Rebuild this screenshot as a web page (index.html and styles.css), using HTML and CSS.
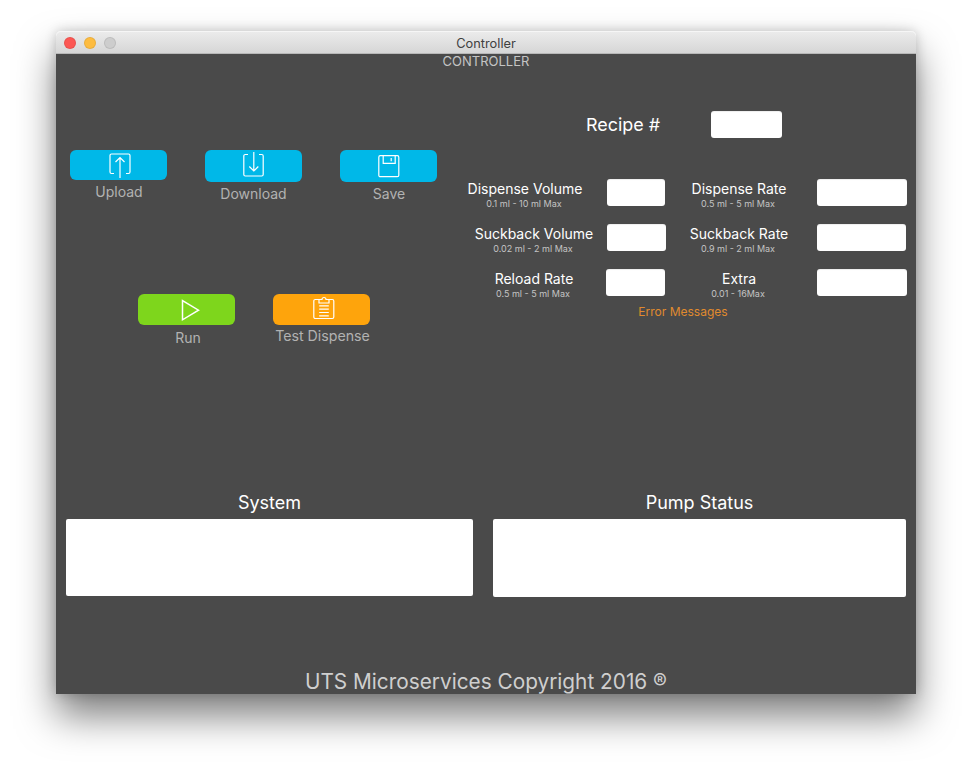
FILE: index.html
```html
<!DOCTYPE html>
<html lang="en">
  <head>
    <meta charset="UTF-8" />
    <title>Controller</title>
    <link rel="stylesheet" href="styles.css">
  </head>
  <body>
    <div class="window">
      <div class="titlebar">
        <div class="lights">
          <span class="light red"></span>
          <span class="light yellow"></span>
          <span class="light gray"></span>
        </div>
        <span class="title">Controller</span>
      </div>
      <div class="content">
        <div class="heading">CONTROLLER</div>
        <div class="main">
          <div class="left">
            <div class="tools">
              <div class="tool">
                <button class="btn blue short">
                  <svg class="icon" width="24" height="24" viewBox="0 0 24 24" fill="none" stroke="#fff" stroke-width="1.2">
                    <path d="M7 20.500H4.500A1.500 1.500 0 0 1 3 19V2.500A1.500 1.500 0 0 1 4.500 1H21.500A1.500 1.500 0 0 1 23 2.500V19A1.500 1.500 0 0 1 21.500 20.500H19" />
                    <path d="M13 25V4.500M8.500 9L13 4.500L17.500 9" />
                  </svg>
                </button>
                <span class="tool-label shift-1">Upload</span>
              </div>
              <div class="tool">
                <button class="btn blue">
                  <svg class="icon" width="24" height="24" viewBox="0 0 24 24" fill="none" stroke="#fff" stroke-width="1.2">
                    <path d="M6 0.500H3.300A1.500 1.500 0 0 0 1.800 2V20.500A1.500 1.500 0 0 0 3.300 22H19.700A1.500 1.500 0 0 0 21.200 20.500V2A1.500 1.500 0 0 0 19.700 0.500H17" />
                    <path d="M11.800 -2V17M7.300 12.500L11.800 17L16.300 12.500" />
                  </svg>
                </button>
                <span class="tool-label">Download</span>
              </div>
              <div class="tool">
                <button class="btn blue">
                  <svg class="icon" width="24" height="24" viewBox="0 0 24 24" fill="none" stroke="#fff" stroke-width="1.2">
                    <path d="M3.300 1.700H20.300A1.500 1.500 0 0 1 21.800 3.200V21.200A1.500 1.500 0 0 1 20.300 22.700H3.300A1.500 1.500 0 0 1 1.800 21.200V3.200A1.500 1.500 0 0 1 3.300 1.700Z" />
                    <path d="M6.200 1.700V9.300H18.200V1.700M14.200 4V7.300" />
                  </svg>
                </button>
                <span class="tool-label shift-1">Save</span>
              </div>
            </div>
            <div class="actions">
              <div class="tool">
                <button class="btn green">
                  <svg class="icon" width="24" height="24" viewBox="0 0 24 24" fill="none" stroke="#fff" stroke-width="1.5">
                    <path d="M7.500 2.500V21.800L23.500 12.200Z" />
                  </svg>
                </button>
                <span class="tool-label run-label">Run</span>
              </div>
              <div class="tool">
                <button class="btn orange">
                  <svg class="icon" width="24" height="24" viewBox="0 0 24 24" fill="none" stroke="#fff" stroke-width="1.2">
                    <path d="M9 1.500H5.300A1.500 1.500 0 0 0 3.800 3V19A1.500 1.500 0 0 0 5.300 20.500H22.300A1.500 1.500 0 0 0 23.800 19V3A1.500 1.500 0 0 0 22.300 1.500H19" />
                    <path d="M9 5V1.500H12A1.800 1.800 0 0 1 16 1.500H19V5Z" />
                    <path d="M9.200 7.800H18.800M9.200 11.200H18.800M9.200 14.500H18.800M9.200 17.800H18.800" />
                  </svg>
                </button>
                <span class="tool-label test-label">Test Dispense</span>
              </div>
            </div>
          </div>
          <div class="right">
            <div class="recipe">
              <span class="recipe-label">Recipe #</span>
              <input class="field recipe-input" type="text" />
            </div>
            <div class="params">
              <div class="param-label first">Dispense Volume<small>0.1 ml - 10 ml Max</small></div>
              <input class="field less" type="text" />
              <div class="param-label second">Dispense Rate<small>0.5 ml - 5 ml Max</small></div>
              <input class="field" type="text" />
              <div class="param-label">Suckback Volume<small>0.02 ml - 2 ml Max</small></div>
              <input class="field" type="text" />
              <div class="param-label second">Suckback Rate<small>0.9 ml - 2 ml Max</small></div>
              <input class="field less" type="text" />
              <div class="param-label">Reload Rate<small>0.5 ml - 5 ml Max</small></div>
              <input class="field back" type="text" />
              <div class="param-label second">Extra<small>0.01 - 16Max</small></div>
              <input class="field" type="text" />
            </div>
            <div class="error">Error Messages</div>
          </div>
        </div>
        <div class="status">
          <div class="status-col system">
            <div class="status-label">System</div>
            <div class="status-box"></div>
          </div>
          <div class="status-col pump">
            <div class="status-label">Pump Status</div>
            <div class="status-box"></div>
          </div>
        </div>
        <div class="footer">UTS Microservices Copyright 2016 ®</div>
      </div>
    </div>
  </body>
</html>
```

FILE: styles.css
```css
html,
body {
  height: 100%;
}
body {
  margin: 0;
  padding: 31px 56px 0;
  box-sizing: border-box;
  background-color: #fff;
  font-family: Inter, "Liberation Sans", sans-serif;
  overflow: hidden;
}
.window {
  width: 860px;
  height: 663px;
  display: flex;
  flex-direction: column;
  border-radius: 5px 5px 0 0;
  box-shadow: 0 22px 38px rgba(0, 0, 0, 0.5), 0 0 12px rgba(0, 0, 0, 0.2);
}
.titlebar {
  height: 23px;
  flex: none;
  display: flex;
  align-items: center;
  justify-content: center;
  position: relative;
  box-sizing: border-box;
  border-radius: 5px 5px 0 0;
  border-bottom: 1px solid #b8b8b8;
  background: linear-gradient(#ececec, #d6d6d6);
  box-shadow: inset 0 1px 0 #f6f6f6;
}
.lights {
  position: absolute;
  left: 8px;
  top: 6px;
  display: flex;
  gap: 8px;
}
.light {
  width: 12px;
  height: 12px;
  box-sizing: border-box;
  border-radius: 50%;
  border: 1px solid rgba(0, 0, 0, 0.08);
}
.red {
  background-color: #fc5753;
}
.yellow {
  background-color: #fdbc40;
}
.gray {
  background-color: #cdcdcd;
}
.title {
  font-size: 12.8px;
  line-height: 16px;
  margin-top: 3px;
  color: #404040;
}
.content {
  flex: 1;
  display: flex;
  flex-direction: column;
  background-color: #4a4a4a;
}
.heading {
  height: 14px;
  line-height: 15px;
  font-size: 13px;
  text-align: center;
  color: #c4c4c4;
}
.main {
  height: 425px;
  display: flex;
}
.left {
  width: 400px;
  padding-left: 14px;
  box-sizing: border-box;
}
.tools {
  margin-top: 82px;
  height: 144px;
  display: flex;
  align-items: flex-start;
  gap: 38px;
}
.actions {
  margin-left: 68px;
  display: flex;
  align-items: flex-start;
  gap: 38px;
}
.tool {
  width: 97px;
  display: flex;
  flex-direction: column;
  align-items: center;
}
.btn {
  width: 97px;
  height: 32px;
  padding: 0;
  border: none;
  border-radius: 6px;
  display: flex;
  align-items: center;
  justify-content: center;
}
.btn.short {
  height: 30px;
}
.icon {
  flex: none;
  overflow: visible;
}
.blue {
  background-color: #00b8e8;
}
.green {
  height: 31px;
  background-color: #7ed61c;
}
.orange {
  height: 31px;
  background-color: #fea40c;
}
.tool-label {
  margin-top: 3px;
  font-size: 14px;
  line-height: 18px;
  color: #b2b2b2;
  white-space: nowrap;
}
.tool-label.shift-1 {
  margin-left: 1px;
}
.tool-label.run-label {
  margin-top: 4px;
  margin-left: 3px;
}
.tool-label.test-label {
  margin-top: 2px;
  margin-left: 2px;
  font-size: 14.2px;
}
.right {
  flex: 1;
}
.recipe {
  margin-top: 43px;
  display: flex;
  align-items: center;
  padding-left: 130px;
  gap: 51px;
}
.recipe-label {
  font-size: 17.9px;
  color: #fff;
  width: 74px;
  white-space: nowrap;
}
.field {
  height: 27px;
  width: 100%;
  padding: 0;
  border: none;
  border-radius: 3px;
  box-sizing: border-box;
  background-color: #fff;
  box-shadow: inset 0 1px 1px rgba(0, 0, 0, 0.07);
}
.field.less {
  width: calc(100% - 1px);
}
.field.back {
  margin-left: -1px;
}
.recipe-input {
  width: 71px;
}
.params {
  margin-top: 41px;
  display: grid;
  grid-template-columns: 151px 59px 151px 90px;
  grid-auto-rows: 27px;
  row-gap: 18px;
  align-items: start;
}
.param-label {
  font-size: 14px;
  line-height: 20px;
  color: #fff;
  text-align: center;
  white-space: nowrap;
  margin-left: 5px;
  margin-right: 0;
}
.param-label.first {
  margin-left: 0;
  margin-right: 13px;
}
.param-label.second {
  margin-left: 0;
  margin-right: 5px;
}
.param-label small {
  display: block;
  margin-right: 2px;
  font-size: 9px;
  line-height: 10px;
  color: #c4c4c4;
}
.error {
  width: 454px;
  margin-top: 8px;
  text-align: center;
  font-size: 12px;
  line-height: 16px;
  color: #e08a2e;
}
.status {
  display: flex;
  gap: 20px;
  margin-left: 10px;
}
.status-col {
  display: flex;
  flex-direction: column;
}
.system {
  width: 407px;
}
.pump {
  width: 413px;
}
.status-label {
  height: 26px;
  line-height: 20px;
  font-size: 18px;
  color: #fff;
  text-align: center;
}
.status-box {
  height: 77px;
  border-radius: 2px;
  background-color: #fff;
}
.pump .status-box {
  height: 78px;
}
.footer {
  margin-top: auto;
  line-height: 25px;
  font-size: 20.8px;
  text-align: center;
  color: #cfcfcf;
}
```
